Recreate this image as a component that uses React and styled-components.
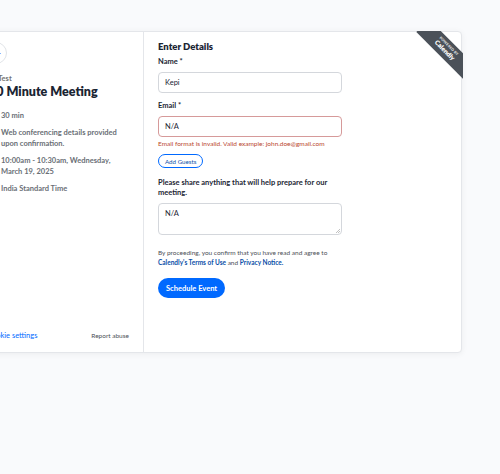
import React from "react";
import styled, { createGlobalStyle } from "styled-components";

const Global = createGlobalStyle`
  html, body { margin: 0; padding: 0; background: #f9fafc; }
  body { font-family: Lato, "Liberation Sans", sans-serif; overflow: hidden; width: 500px; height: 474px; }
  * { box-sizing: border-box; }
`;

const Page = styled.div`
  width: 500px;
  height: 474px;
  padding-top: 31px;
`;

const Card = styled.div`
  position: relative;
  margin-left: -40px;
  width: 502px;
  height: 322px;
  background: #fff;
  border: 1px solid #e4e6ea;
  border-radius: 4px;
  box-shadow: 0 1px 6px rgba(0, 0, 0, 0.06);
  display: flex;
`;

const LeftPanel = styled.div`
  width: 183px;
  border-right: 1px solid #e4e6ea;
  padding: 10px 14px 12px 32px;
  display: flex;
  flex-direction: column;
`;

const BackButton = styled.div`
  width: 22px;
  height: 22px;
  margin-left: -8px;
  border-radius: 50%;
  border: 1px solid #e1e4e8;
  display: flex;
  align-items: center;
  justify-content: flex-end;
  padding-right: 4px;
  color: #0069ff;
`;

const Organizer = styled.div`
  margin-top: 10px;
  margin-left: 5px;
  font-size: 7.5px;
  line-height: 9px;
  font-weight: 700;
  color: #737373;
`;

const Title = styled.h1`
  margin: 1px 0 0 -4px;
  font-size: 12.5px;
  line-height: 15px;
  font-weight: 800;
  color: #1b2533;
  white-space: nowrap;
`;

const Details = styled.div`
  margin-top: 11px;
  display: flex;
  flex-direction: column;
  gap: 6px;
`;

const DetailRow = styled.div`
  display: flex;
  gap: 4px;
  margin-left: -5px;
  font-size: 7.5px;
  line-height: 11px;
  font-weight: 700;
  color: #6a6f76;
`;

const DetailIcon = styled.span`
  flex: none;
  width: 9px;
  height: 9px;
  margin-top: 1px;
  color: #8a8f96;
`;

const Footer = styled.div`
  margin-top: auto;
  margin-left: -6px;
  display: flex;
  justify-content: space-between;
  align-items: center;
`;

const CookieLink = styled.span`
  font-size: 7.5px;
  color: #0069ff;
`;

const ReportLink = styled.span`
  font-size: 6.5px;
  color: #4d5157;
`;

const RightPanel = styled.div`
  flex: 1;
  padding: 9px 14px;
  display: flex;
  flex-direction: column;
`;

const Heading = styled.h2`
  margin: 0;
  font-size: 9.5px;
  line-height: 12px;
  font-weight: 800;
  color: #1b2533;
`;

const Label = styled.div`
  margin-top: ${(p) => p.$mt || 0}px;
  font-size: 7.5px;
  line-height: 10px;
  font-weight: 700;
  color: #1b2533;
  width: 184px;
`;

const Field = styled.div`
  margin-top: ${(p) => p.$mt || 5}px;
  width: 184px;
  height: ${(p) => p.$h || 21}px;
  flex: none;
  border: 1px solid ${(p) => (p.$error ? "#d69a9a" : "#d4d7dc")};
  border-radius: 4px;
  padding: ${(p) => (p.$area ? "5px 6px" : "0 6px")};
  display: flex;
  align-items: ${(p) => (p.$area ? "flex-start" : "center")};
  font-size: 7.5px;
  color: #1b2533;
  position: relative;
`;

const Resize = styled.svg`
  position: absolute;
  right: 1px;
  bottom: 1px;
`;

const ErrorText = styled.div`
  margin-top: 2px;
  font-size: 6.5px;
  line-height: 9px;
  color: #b9482e;
`;

const GuestsButton = styled.div`
  margin-top: 6px;
  align-self: flex-start;
  height: 14px;
  padding: 0 6px;
  border: 1px solid #0069ff;
  border-radius: 8px;
  display: flex;
  align-items: center;
  font-size: 6.2px;
  color: #0b4fa8;
`;

const Consent = styled.div`
  margin-top: 13px;
  font-size: 6.5px;
  line-height: 10px;
  color: #4d5157;
  width: 190px;
`;

const TermsLink = styled.span`
  color: #0b4fa8;
  font-weight: 700;
`;

const PrimaryButton = styled.div`
  margin-top: 10px;
  align-self: flex-start;
  height: 20px;
  padding: 0 8px;
  border-radius: 10px;
  background: #0069ff;
  color: #fff;
  font-size: 7.5px;
  font-weight: 700;
  display: flex;
  align-items: center;
`;

const RibbonClip = styled.div`
  position: absolute;
  top: -1px;
  right: -2px;
  width: 48px;
  height: 48px;
  overflow: hidden;
`;

const Ribbon = styled.div`
  position: absolute;
  top: 9px;
  right: -16px;
  width: 66px;
  height: 18px;
  transform: rotate(45deg);
  background: #4b5159;
  color: #fff;
  display: flex;
  flex-direction: column;
  align-items: center;
  justify-content: center;
  line-height: 1;
`;

const RibbonSmall = styled.span`
  font-size: 3.5px;
  font-weight: 700;
  letter-spacing: 0.2px;
  text-transform: uppercase;
`;

const RibbonBig = styled.span`
  font-size: 6.5px;
  font-weight: 800;
`;

const Clock = () => (
  <svg viewBox="0 0 24 24" width="9" height="9" fill="none" stroke="currentColor" strokeWidth="2.5">
    <circle cx="12" cy="12" r="10" />
    <path d="M12 6v6l4 2" />
  </svg>
);

export default function App() {
  return (
    <>
      <Global />
      <Page>
        <Card>
          <LeftPanel>
            <BackButton>
              <svg viewBox="0 0 24 24" width="9" height="9" fill="none" stroke="currentColor" strokeWidth="2.5" strokeLinecap="round">
                <path d="M19 12H5M11 6l-6 6 6 6" />
              </svg>
            </BackButton>
            <Organizer>Test</Organizer>
            <Title>30 Minute Meeting</Title>
            <Details>
              <DetailRow>
                <DetailIcon><Clock /></DetailIcon>
                <span>30 min</span>
              </DetailRow>
              <DetailRow>
                <DetailIcon><Clock /></DetailIcon>
                <span>Web conferencing details provided upon confirmation.</span>
              </DetailRow>
              <DetailRow>
                <DetailIcon><Clock /></DetailIcon>
                <span>10:00am - 10:30am, Wednesday, March 19, 2025</span>
              </DetailRow>
              <DetailRow>
                <DetailIcon><Clock /></DetailIcon>
                <span>India Standard Time</span>
              </DetailRow>
            </Details>
            <Footer>
              <CookieLink>Cookie settings</CookieLink>
              <ReportLink>Report abuse</ReportLink>
            </Footer>
          </LeftPanel>
          <RightPanel>
            <Heading>Enter Details</Heading>
            <Label $mt={4}>Name *</Label>
            <Field>Kepi</Field>
            <Label $mt={8}>Email *</Label>
            <Field $error>N/A</Field>
            <ErrorText>Email format is invalid. Valid example: john.doe@gmail.com</ErrorText>
            <GuestsButton>Add Guests</GuestsButton>
            <Label $mt={10}>Please share anything that will help prepare for our meeting.</Label>
            <Field $area $h={32} $mt={5}>
              N/A
              <Resize width="5" height="5" viewBox="0 0 5 5">
                <path d="M1 5L5 1M3 5L5 3" stroke="#999" strokeWidth="0.6" />
              </Resize>
            </Field>
            <Consent>
              By proceeding, you confirm that you have read and agree to{" "}
              <TermsLink>Calendly's Terms of Use</TermsLink> and <TermsLink>Privacy Notice.</TermsLink>
            </Consent>
            <PrimaryButton>Schedule Event</PrimaryButton>
          </RightPanel>
          <RibbonClip>
            <Ribbon>
              <RibbonSmall>Powered by</RibbonSmall>
              <RibbonBig>Calendly</RibbonBig>
            </Ribbon>
          </RibbonClip>
        </Card>
      </Page>
    </>
  );
}
